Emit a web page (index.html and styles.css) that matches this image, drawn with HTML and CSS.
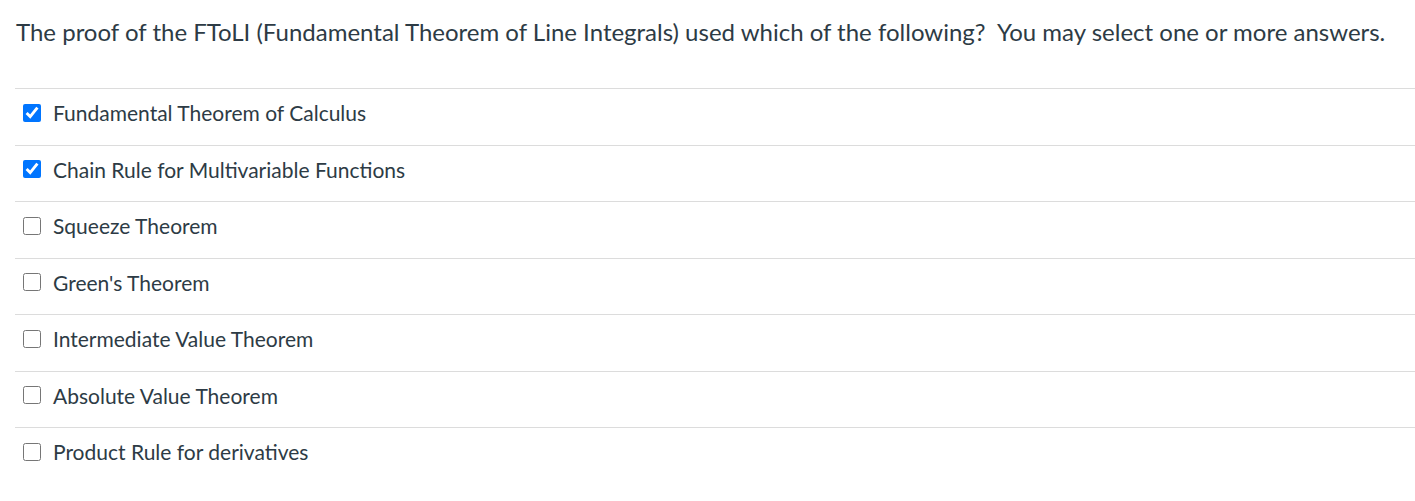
FILE: index.html
```html
<!DOCTYPE html>
<html>
<head>
<meta charset="utf-8">
<link rel="stylesheet" href="styles.css">
</head>
<body>
<div class="quiz">
  <div class="question">The proof of the FToLI (Fundamental Theorem of Line Integrals) used which of the following?&nbsp; You may select one or more answers.</div>
  <div class="answers">
    <label class="answer"><input type="checkbox" checked><span>Fundamental Theorem of Calculus</span></label>
    <label class="answer"><input type="checkbox" checked><span>Chain Rule for Multivariable Functions</span></label>
    <label class="answer"><input type="checkbox"><span>Squeeze Theorem</span></label>
    <label class="answer"><input type="checkbox"><span>Green's Theorem</span></label>
    <label class="answer"><input type="checkbox"><span>Intermediate Value Theorem</span></label>
    <label class="answer"><input type="checkbox"><span>Absolute Value Theorem</span></label>
    <label class="answer"><input type="checkbox"><span>Product Rule for derivatives</span></label>
  </div>
</div>
</body>
</html>
```
FILE: styles.css
```css
html, body {
  margin: 0;
  padding: 0;
  background: #fff;
}
body {
  font-family: Lato, "Open Sans", sans-serif;
  color: #2d3b45;
}
.quiz {
  padding-left: 15px;
}
.question {
  font-size: 24px;
  line-height: 32px;
  padding-top: 16px;
  padding-left: 1px;
  height: 88px;
  box-sizing: border-box;
}
.answers {
  display: flex;
  flex-direction: column;
}
.answer {
  display: flex;
  align-items: center;
  gap: 12px;
  height: 56.5px;
  border-top: 1px solid #dcdcdc;
  box-sizing: border-box;
  padding-left: 8px;
  padding-bottom: 8px;
  font-size: 21px;
}
.answer input {
  margin: 0;
  width: 18px;
  height: 18px;
}
```
